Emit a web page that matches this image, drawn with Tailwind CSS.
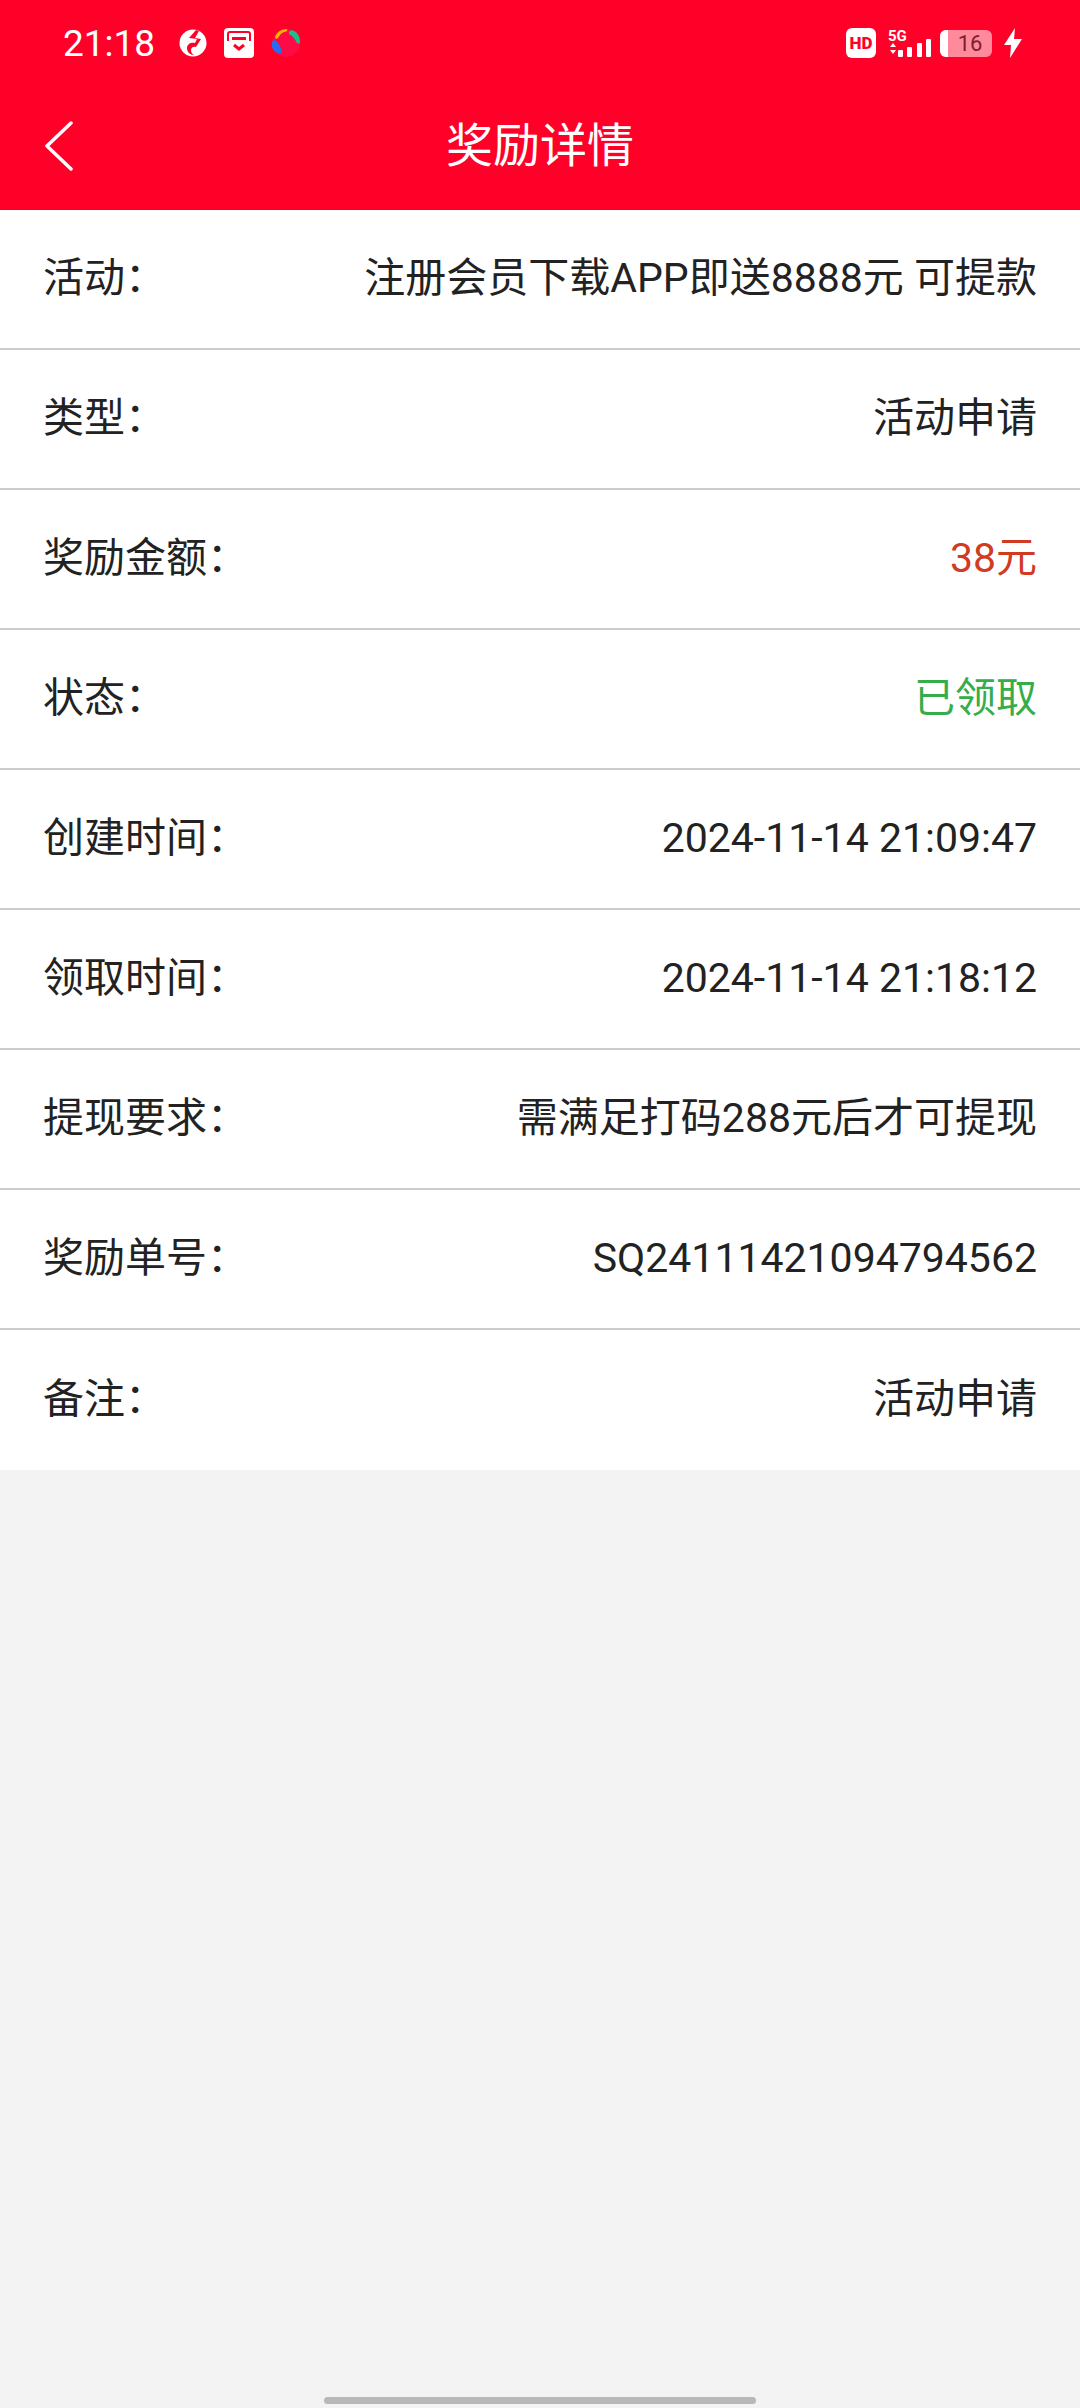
<!DOCTYPE html>
<html lang="zh">
<head>
  <meta charset="UTF-8" />
  <title>奖励详情</title>
  <script src="https://cdn.jsdelivr.net/npm/@tailwindcss/browser@4"></script>
</head>
<body class="bg-[#f3f3f3] font-['Roboto','Noto_Sans_CJK_SC',sans-serif]">
  <div class="relative w-[1080px] h-[2408px] flex flex-col">

    <!-- 顶部红色区域 -->
    <header class="h-[210px] bg-[#ff0029] text-white flex flex-col">
      <div class="h-[86px] pl-[63px] pr-[57px] flex items-center">
        <span class="text-[37px] leading-none">21:18</span>
        <svg class="ml-[24px]" width="28" height="28" viewBox="0 0 28 28">
          <circle cx="14" cy="14" r="13.5" fill="#fff"/>
          <path d="M17 1 10 9l8 1-2 4c-4-1-8 1-8 5 0 4 3 7 7 7-2-1-3-3-3-5 0-3 3-4 5-3l5-8-6-1 4-7z" fill="#ff0029"/>
        </svg>
        <svg class="ml-[17px]" width="30" height="30" viewBox="0 0 30 30">
          <rect width="30" height="30" rx="4" fill="#fff"/>
          <path d="M4 13V6q0-2 2-2h18q2 0 2 2v7" fill="none" stroke="#ff0029" stroke-width="2"/>
          <path d="M8 9h14v3H8z" fill="#ff0029"/>
          <path d="M10 17l5 4 5-4" fill="none" stroke="#ff0029" stroke-width="3"/>
        </svg>
        <svg class="ml-[17px]" width="30" height="30" viewBox="0 0 30 30">
          <circle cx="15" cy="15" r="14" fill="#ff0a45"/>
          <path d="M4 9c2-5 6-8 12-8 1 2-1 3-3 3-3 1-4 3-6 6-1 1-3 1-3-1z" fill="#ffb300"/>
          <path d="M18 4c1-2 3-2 5-1 4 2 6 6 6 11 0 2-2 2-3 1-2-4-4-7-8-9z" fill="#16c08c"/>
          <path d="M1 14c1-2 3-2 4-1 3 3 5 6 6 10 0 2-2 3-4 2-5-2-7-6-6-11z" fill="#2a6cf0"/>
        </svg>

        <div class="ml-auto flex items-center">
          <div class="w-[30px] h-[30px] rounded-[6px] bg-white text-[#ff0029] text-[17px] font-black flex items-center justify-center leading-none">HD</div>
          <svg class="ml-[11px]" width="44" height="30" viewBox="0 0 44 30">
            <text x="1" y="13" font-size="15" font-weight="700" fill="#fff" font-family="Roboto">5G</text>
            <path d="M3 19l3-4 3 4zM3 22h6l-3 4z" fill="#fff"/>
            <rect x="11" y="22" width="5" height="7" rx="1" fill="#fff"/>
            <rect x="20" y="19" width="5" height="10" rx="1" fill="#fff"/>
            <rect x="30" y="15" width="5" height="14" rx="1" fill="#fff"/>
            <rect x="39" y="11" width="5" height="18" rx="1" fill="#fff"/>
          </svg>
          <div class="ml-[9px] w-[52px] h-[27px] rounded-[6px] bg-[#ff8a9c] overflow-hidden flex relative">
            <div class="w-[8px] bg-white"></div>
            <span class="flex-1 text-center text-[#7a1f2e] text-[22px] leading-[27px]">16</span>
          </div>
          <svg class="ml-[12px]" width="19" height="30" viewBox="0 0 19 30">
            <path d="M11 0 0 17h7l-1 13L18 11h-8z" fill="#fff"/>
          </svg>
        </div>
      </div>
      <div class="relative flex-1 flex items-center justify-center pb-[6px]">
        <svg class="absolute left-[44px] top-[35px]" width="30" height="50" viewBox="0 0 30 50">
          <path d="M27 2 3 25l24 23" fill="none" stroke="#fff" stroke-width="3.5" stroke-linecap="round" stroke-linejoin="round"/>
        </svg>
        <h1 class="text-[47px] leading-none">奖励详情</h1>
      </div>
    </header>

    <!-- 详情列表 -->
    <main class="bg-white text-[#222] text-[41px] divide-y-2 divide-[#cccccc]">
      <div class="h-[140px] px-[43px] flex items-center justify-between"><span>活动：</span><span>注册会员下载APP即送8888元 可提款</span></div>
      <div class="h-[140px] px-[43px] flex items-center justify-between"><span>类型：</span><span>活动申请</span></div>
      <div class="h-[140px] px-[43px] flex items-center justify-between"><span>奖励金额：</span><span class="text-[#d13b22]">38元</span></div>
      <div class="h-[140px] px-[43px] flex items-center justify-between"><span>状态：</span><span class="text-[#35ad4a]">已领取</span></div>
      <div class="h-[140px] px-[43px] flex items-center justify-between"><span>创建时间：</span><span>2024-11-14 21:09:47</span></div>
      <div class="h-[140px] px-[43px] flex items-center justify-between"><span>领取时间：</span><span>2024-11-14 21:18:12</span></div>
      <div class="h-[140px] px-[43px] flex items-center justify-between"><span>提现要求：</span><span>需满足打码288元后才可提现</span></div>
      <div class="h-[140px] px-[43px] flex items-center justify-between"><span>奖励单号：</span><span>SQ24111421094794562</span></div>
      <div class="h-[140px] px-[43px] flex items-center justify-between"><span>备注：</span><span>活动申请</span></div>
    </main>

    <!-- 手势条 -->
    <div class="absolute left-[324px] bottom-[4px] w-[432px] h-[7px] rounded-full bg-[#b8b8b8]"></div>
  </div>
</body>
</html>
